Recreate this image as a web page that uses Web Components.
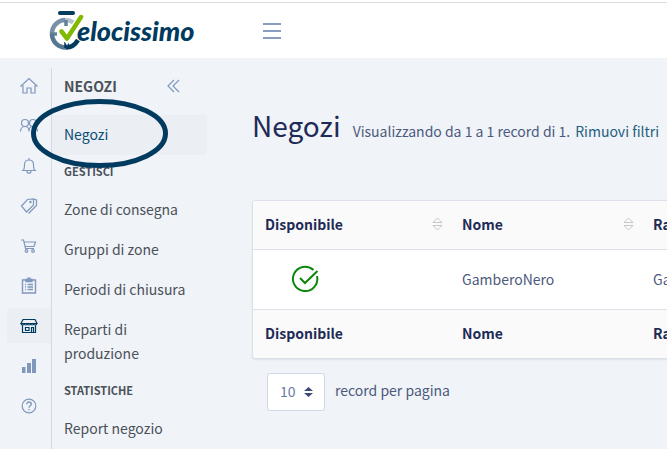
<!DOCTYPE html>
<html lang="it">
<head>
<meta charset="utf-8">
<meta name="viewport" content="width=device-width, initial-scale=1">
<title>Velocissimo - Negozi</title>
<style>
	html {
		--navy: #003b5f;
		--ink: #1e2b56;
		--body-text: #4c5a7d;
		--menu-text: #4b5158;
		--icon: #8198bd;
		--page: #f0f3f8;
		--line: #dce0e8;
		--highlight: #ebeef3;
	}
	body {
		margin: 0;
		background: var(--page);
		color: var(--body-text);
		font: 14px/24px "Noto Sans CJK SC", "Noto Sans", sans-serif;
	}
</style>
</head>
<body>
<app-shell>
	<app-header slot="header"><brand-logo>elocissimo</brand-logo></app-header>
	<icon-rail slot="rail">
		<rail-link icon="home" label="Home"></rail-link>
		<rail-link icon="users" label="Clienti"></rail-link>
		<rail-link icon="bell" label="Notifiche"></rail-link>
		<rail-link icon="tags" label="Offerte"></rail-link>
		<rail-link icon="cart" label="Ordini"></rail-link>
		<rail-link icon="clipboard" label="Listini"></rail-link>
		<rail-link icon="store" label="Negozi" active></rail-link>
		<rail-link icon="bars" label="Statistiche"></rail-link>
		<rail-link icon="help" label="Aiuto"></rail-link>
	</icon-rail>
	<side-menu slot="menu">
		<span slot="title">NEGOZI</span>
		<menu-link active>Negozi</menu-link>
		<menu-heading>GESTISCI</menu-heading>
		<menu-link>Zone di consegna</menu-link>
		<menu-link>Gruppi di zone</menu-link>
		<menu-link>Periodi di chiusura</menu-link>
		<menu-link>Reparti di produzione</menu-link>
		<menu-heading>STATISTICHE</menu-heading>
		<menu-link>Report negozio</menu-link>
	</side-menu>
	<page-title>
		Negozi
		<span slot="summary">Visualizzando da 1 a 1 record di 1.</span>
		<span slot="action">Rimuovi filtri</span>
	</page-title>
	<store-table></store-table>
	<page-size>record per pagina</page-size>
</app-shell>

<script>
const ICONS = {
	home: '<path d="M1 9 9 1.500l8 7.500h-2v7h-4v-5H7v5H3V9z"/>',
	users: '<circle cx="5" cy="6" r="3.500"/><circle cx="13" cy="6" r="3.500"/><path d="M.5 14.500c0-3 2-5 4.500-5s4 2 4 5M9 14.500c0-3 1.500-5 4-5s4.500 2 4.500 5"/>',
	bell: '<path d="M3 13.500c1.500-1 1.500-3 1.500-6C4.500 4.500 6.500 3 9 3s4.500 1.500 4.500 4.500c0 3 0 5 1.500 6zM9 3V1M7 14c0 3 4 3 4 0"/>',
	tags: '<path d="m1.500 9 6-6.500 6-.5v6l-7 7zM8.500 16.500l8-8V3l-3-1"/><circle cx="10.500" cy="5" r=".6"/>',
	cart: '<path d="M1 3h2.500l2 8.500h8.500M4 5h11.500L14 9.500H5"/><circle cx="6.500" cy="14" r="1.300"/><circle cx="13" cy="14" r="1.300"/>',
	clipboard: '<path d="M2.500 3h13v13h-13zM6 2.500h2V1.200h2v1.300h2v2H6zM5 7.500h1M7.500 7.500H13M5 10h1M7.500 10H13M5 12.500h1M7.500 12.500H13" stroke-width="1.400"/>',
	store: '<path d="M3 2.500h12l2 4H1zM1 6.500c.5 2 3 2 3.200 0 .3 2 3 2 3.200 0 .3 2 3 2 3.200 0 .3 2 3 2 3.200 0 .2 2 2.800 2 3.200 0M2.500 8.500v7h13v-7M5.500 10.500h3.500v3H5.500zM11.500 15.500v-5h2v5"/>',
	bars: '<path fill="currentColor" stroke="none" d="M2 10h3.500v6H2zM7 6h4v10H7zM12 2h4v14h-4z"/>',
	help: '<circle cx="9" cy="9" r="6.800"/><path d="M6.800 7.200c0-3 4.500-2.700 4.500 0C11.300 8.800 9 8.700 9 10.800M9 12v1.300" stroke-width="1.400"/>',
};

function define(name, html, setup) {
	const template = document.createElement("template");
	template.innerHTML = html;
	customElements.define(name, class extends HTMLElement {
		constructor() {
			super();
			this.attachShadow({ mode: "open" });
			this.shadowRoot.append(template.content.cloneNode(true));
		}
		connectedCallback() {
			if (setup) setup(this, this.shadowRoot);
		}
	});
}

define("app-shell", `
	<style>
		:host {
			display: flex;
			flex-direction: column;
			position: relative;
			height: 100vh;
			overflow: hidden;
		}
		.columns { display: flex; flex: 1; min-height: 0; }
		.side { display: flex; padding-top: 10px; }
		main {
			flex: 1;
			min-width: 0;
			padding: 43px 0 0 45px;
		}
		.marker {
			position: absolute;
			left: 31px;
			top: 99px;
			width: 137px;
			height: 69px;
			pointer-events: none;
		}
	</style>
	<slot name="header"></slot>
	<div class="columns">
		<div class="side"><slot name="rail"></slot><slot name="menu"></slot></div>
		<main><slot></slot></main>
	</div>
	<svg class="marker" viewBox="0 0 137 69" aria-hidden="true">
		<ellipse cx="68.500" cy="34.500" rx="66" ry="32" fill="none" stroke="#003b5f" stroke-width="5"/>
	</svg>
`);

define("app-header", `
	<style>
		:host { display: block; padding-top: 2px; background: #fff; }
		header {
			display: flex;
			align-items: center;
			gap: 67px;
			height: 55px;
			padding-left: 49px;
			border-top: 1px solid #dcdcdc;
		}
		button { display: flex; padding: 0; border: 0; background: none; color: #8b9cc3; }
	</style>
	<header>
		<slot></slot>
		<button aria-label="Menu">
			<svg width="20" height="18" viewBox="0 0 20 18" fill="none" stroke="currentColor" stroke-width="2"><path d="M1 2h18M1 9h18M1 16h18"/></svg>
		</button>
	</header>
`);

define("brand-logo", `
	<style>
		:host {
			display: flex;
			width: 146px;
			color: var(--navy);
			font: italic 900 27px/44px Lato, sans-serif;
		}
		svg { flex: none; width: 35px; height: 42px; margin-right: -7px; }
	</style>
	<svg viewBox="0 0 35 42" fill="none" aria-hidden="true">
		<rect x="9" y="2" width="17" height="4" rx="2" fill="#003b5f"/>
		<path d="M3 25A13.500 13.500 0 0 1 16.500 11" stroke="#7791a8" stroke-width="4.500"/>
		<path d="M16.500 11q4.500 0 8 2.500" stroke="#b3c1cd" stroke-width="4.500"/>
		<path d="M17 11v6M1 25h7" stroke="#668299" stroke-width="3.500"/>
		<path d="M3 25A13.500 13.500 0 0 0 17 38.500" stroke="#557791" stroke-width="4.500"/>
		<path d="M17 38.500q7.500 0 12-7.500M17.500 39v-6" stroke="#003b5f" stroke-width="4.500"/>
		<path d="m13 22 5 8L32 8" stroke="#fff" stroke-width="7"/>
		<path d="m12.500 22.500 5.500 7L32 8" stroke="#80b900" stroke-width="4.500" stroke-linecap="round" stroke-linejoin="round"/>
	</svg>
	<slot></slot>
`);

define("icon-rail", `
	<style>
		:host { display: block; width: 44px; padding-left: 7px; border-right: 1px solid #d5dae2; }
		nav { display: flex; flex-direction: column; gap: 5px; }
	</style>
	<nav aria-label="Sezioni"><slot></slot></nav>
`);

define("rail-link", `
	<style>
		:host { display: block; }
		a {
			display: flex;
			align-items: center;
			height: 35px;
			padding-left: 13px;
			border-radius: 3px 0 0 3px;
			color: var(--icon);
		}
		:host([active]) a { background: var(--highlight); color: var(--navy); }
	</style>
	<a href="#"><svg width="18" height="18" viewBox="0 0 18 18" fill="none" stroke="currentColor" stroke-width="1.200"></svg></a>
`, (el, root) => {
	root.querySelector("a").setAttribute("aria-label", el.getAttribute("label"));
	root.querySelector("svg").innerHTML = ICONS[el.getAttribute("icon")];
});

define("side-menu", `
	<style>
		:host { display: block; width: 155px; color: var(--menu-text); }
		header {
			display: flex;
			align-items: center;
			justify-content: space-between;
			height: 35px;
			margin-bottom: 12px;
			padding: 0 27px 0 12px;
			font-weight: 700;
		}
		button { display: flex; padding: 0; border: 0; background: none; color: var(--icon); }
	</style>
	<header>
		<slot name="title"></slot>
		<button aria-label="Chiudi menu">
			<svg width="13" height="14" viewBox="0 0 13 14" fill="none" stroke="currentColor" stroke-width="1.200"><path d="M7 1 1 7l6 6M12 1 6 7l6 6"/></svg>
		</button>
	</header>
	<nav aria-label="Negozi"><slot></slot></nav>
`);

define("menu-link", `
	<style>
		:host { display: block; }
		a {
			display: block;
			padding: 7px 12px 9px;
			border-radius: 0 3px 3px 0;
			color: inherit;
			text-decoration: none;
		}
		:host([active]) a { background: var(--highlight); color: #0a4f75; }
	</style>
	<a href="#"><slot></slot></a>
`);

define("menu-heading", `
	<style>
		:host { display: block; padding: 0 12px 2px; font-size: 11px; font-weight: 700; line-height: 33px; }
	</style>
	<slot></slot>
`);

define("page-title", `
	<style>
		:host { display: flex; align-items: baseline; white-space: nowrap; overflow: hidden; margin-bottom: 51px; }
		h1 { margin: 0 12px 0 0; color: var(--ink); font-size: 28px; font-weight: 400; line-height: 48px; }
		a { margin-left: 5px; color: #1d607f; text-decoration: none; }
	</style>
	<h1><slot></slot></h1>
	<slot name="summary"></slot>
	<a href="#"><slot name="action"></slot></a>
`);

define("sort-icon", `
	<style>
		:host { display: block; width: 11px; height: 14px; color: #c3c7ce; }
		svg { display: block; }
	</style>
	<svg width="11" height="14" viewBox="0 0 11 14" fill="none" stroke="currentColor"><path d="M1 5.500h9L5.500 1zM1 8.500h9L5.500 13z"/></svg>
`);

define("store-table", `
	<style>
		:host {
			display: block;
			overflow: hidden;
			border: 1px solid var(--line);
			border-right: 0;
			border-radius: 4px 0 0 4px;
			background: #fff;
			box-shadow: 0 1px 2px #dce0e8;
		}
		table { width: 100%; min-width: 580px; table-layout: fixed; border-collapse: collapse; }
		col.available { width: 197px; }
		col.name { width: 191px; }
		th, td { box-sizing: border-box; padding: 11px 7px 13px 12px; text-align: left; }
		th { height: 48px; background: #fafafa; color: var(--ink); }
		td { height: 60px; }
		tbody tr { border-top: 1px solid var(--line); border-bottom: 1px solid var(--line); }
		.sortable { display: flex; align-items: center; justify-content: space-between; }
		.status { display: flex; width: 80px; justify-content: center; }
	</style>
	<table>
		<colgroup><col class="available"><col class="name"><col></colgroup>
		<thead><tr>
			<th><div class="sortable">Disponibile<sort-icon></sort-icon></div></th>
			<th><div class="sortable">Nome<sort-icon></sort-icon></div></th>
			<th>Ra</th>
		</tr></thead>
		<tbody><tr>
			<td><div class="status">
				<svg width="28" height="28" viewBox="0 0 28 28" fill="none" stroke="#0b860b" stroke-width="2" role="img" aria-label="Disponibile"><path d="M22.500 5A12.200 12.200 0 1 0 26 11M9 13l5 5L26.500 6"/></svg>
			</div></td>
			<td>GamberoNero</td>
			<td>Ga</td>
		</tr></tbody>
		<tfoot><tr><th>Disponibile</th><th>Nome</th><th>Ra</th></tr></tfoot>
	</table>
`);

define("page-size", `
	<style>
		:host { display: flex; align-items: flex-start; gap: 10px; padding: 14px 15px; }
		.box { display: grid; align-items: center; width: 58px; }
		label { padding-top: 5px; }
		select, svg { grid-area: 1 / 1; }
		select {
			appearance: none;
			height: 38px;
			padding: 0 12px 2px;
			border: 1px solid #d0d8e8;
			border-radius: 3px;
			background: #fff;
			color: #667ba4;
			font: inherit;
		}
		svg { justify-self: end; margin-right: 12px; pointer-events: none; }
	</style>
	<div class="box">
		<select id="size"><option>10</option><option>25</option><option>50</option></select>
		<svg width="9" height="10" viewBox="0 0 9 10" fill="#3b4b77" aria-hidden="true"><path d="M0 4h9L4.500 0zM0 6h9l-4.500 4z"/></svg>
	</div>
	<label for="size"><slot></slot></label>
`);
</script>
</body>
</html>
